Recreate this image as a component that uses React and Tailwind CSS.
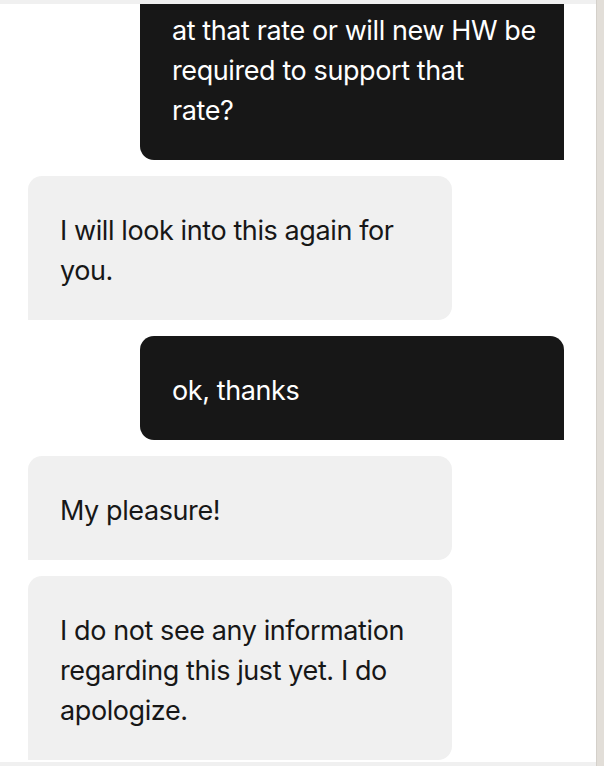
import React from "react";

// lines are pre-broken so the wrap stays the same as in the chat client
const messages = [
  {
    from: "user",
    lines: [
      "Will the old HW handle streaming",
      "at that rate or will new HW be",
      "required to support that",
      "rate?",
    ],
  },
  { from: "agent", lines: ["I will look into this again for", "you."] },
  { from: "user", lines: ["ok, thanks"] },
  { from: "agent", lines: ["My pleasure!"] },
  {
    from: "agent",
    lines: ["I do not see any information", "regarding this just yet. I do", "apologize."],
  },
];

const Bubble = ({ from, lines }) => {
  const isUser = from === "user";
  return (
    <div className={isUser ? "flex justify-end pr-[32px]" : "flex justify-start pl-[28px]"}>
      <div
        className={
          isUser
            ? "w-[424px] bg-[#171717] text-white rounded-t-[14px] rounded-bl-[14px] px-[32px] pt-[35px] pb-[29px]"
            : "w-[424px] bg-[#f0f0f0] text-[#171717] rounded-t-[14px] rounded-br-[14px] px-[32px] pt-[35px] pb-[29px]"
        }
      >
        <p className="text-[27px] leading-[40px] tracking-[-0.015em]">
          {lines.map((line, i) => (
            <span key={i} className="block whitespace-nowrap">
              {line}
            </span>
          ))}
        </p>
      </div>
    </div>
  );
};

export default function App() {
  return (
    <div
      className="flex h-[766px] w-[604px] bg-white"
      style={{ fontFamily: "Inter, 'Noto Sans', sans-serif" }}
    >
      <div className="flex flex-1 flex-col">
        <div className="h-[4px] bg-[#f0f0f0]" />
        {/* scrolled chat log, pinned to the latest message */}
        <div className="flex flex-1 flex-col justify-end overflow-hidden pb-[2px]">
          <div className="flex flex-col gap-[16px]">
            {messages.map((m, i) => (
              <Bubble key={i} {...m} />
            ))}
          </div>
        </div>
        <div className="h-[4px] bg-[#f0f0f0]" />
      </div>
      {/* scrollbar track */}
      <div className="w-[8px] border-l border-[#d4d0ca] bg-[#e2ded8]" />
    </div>
  );
}
